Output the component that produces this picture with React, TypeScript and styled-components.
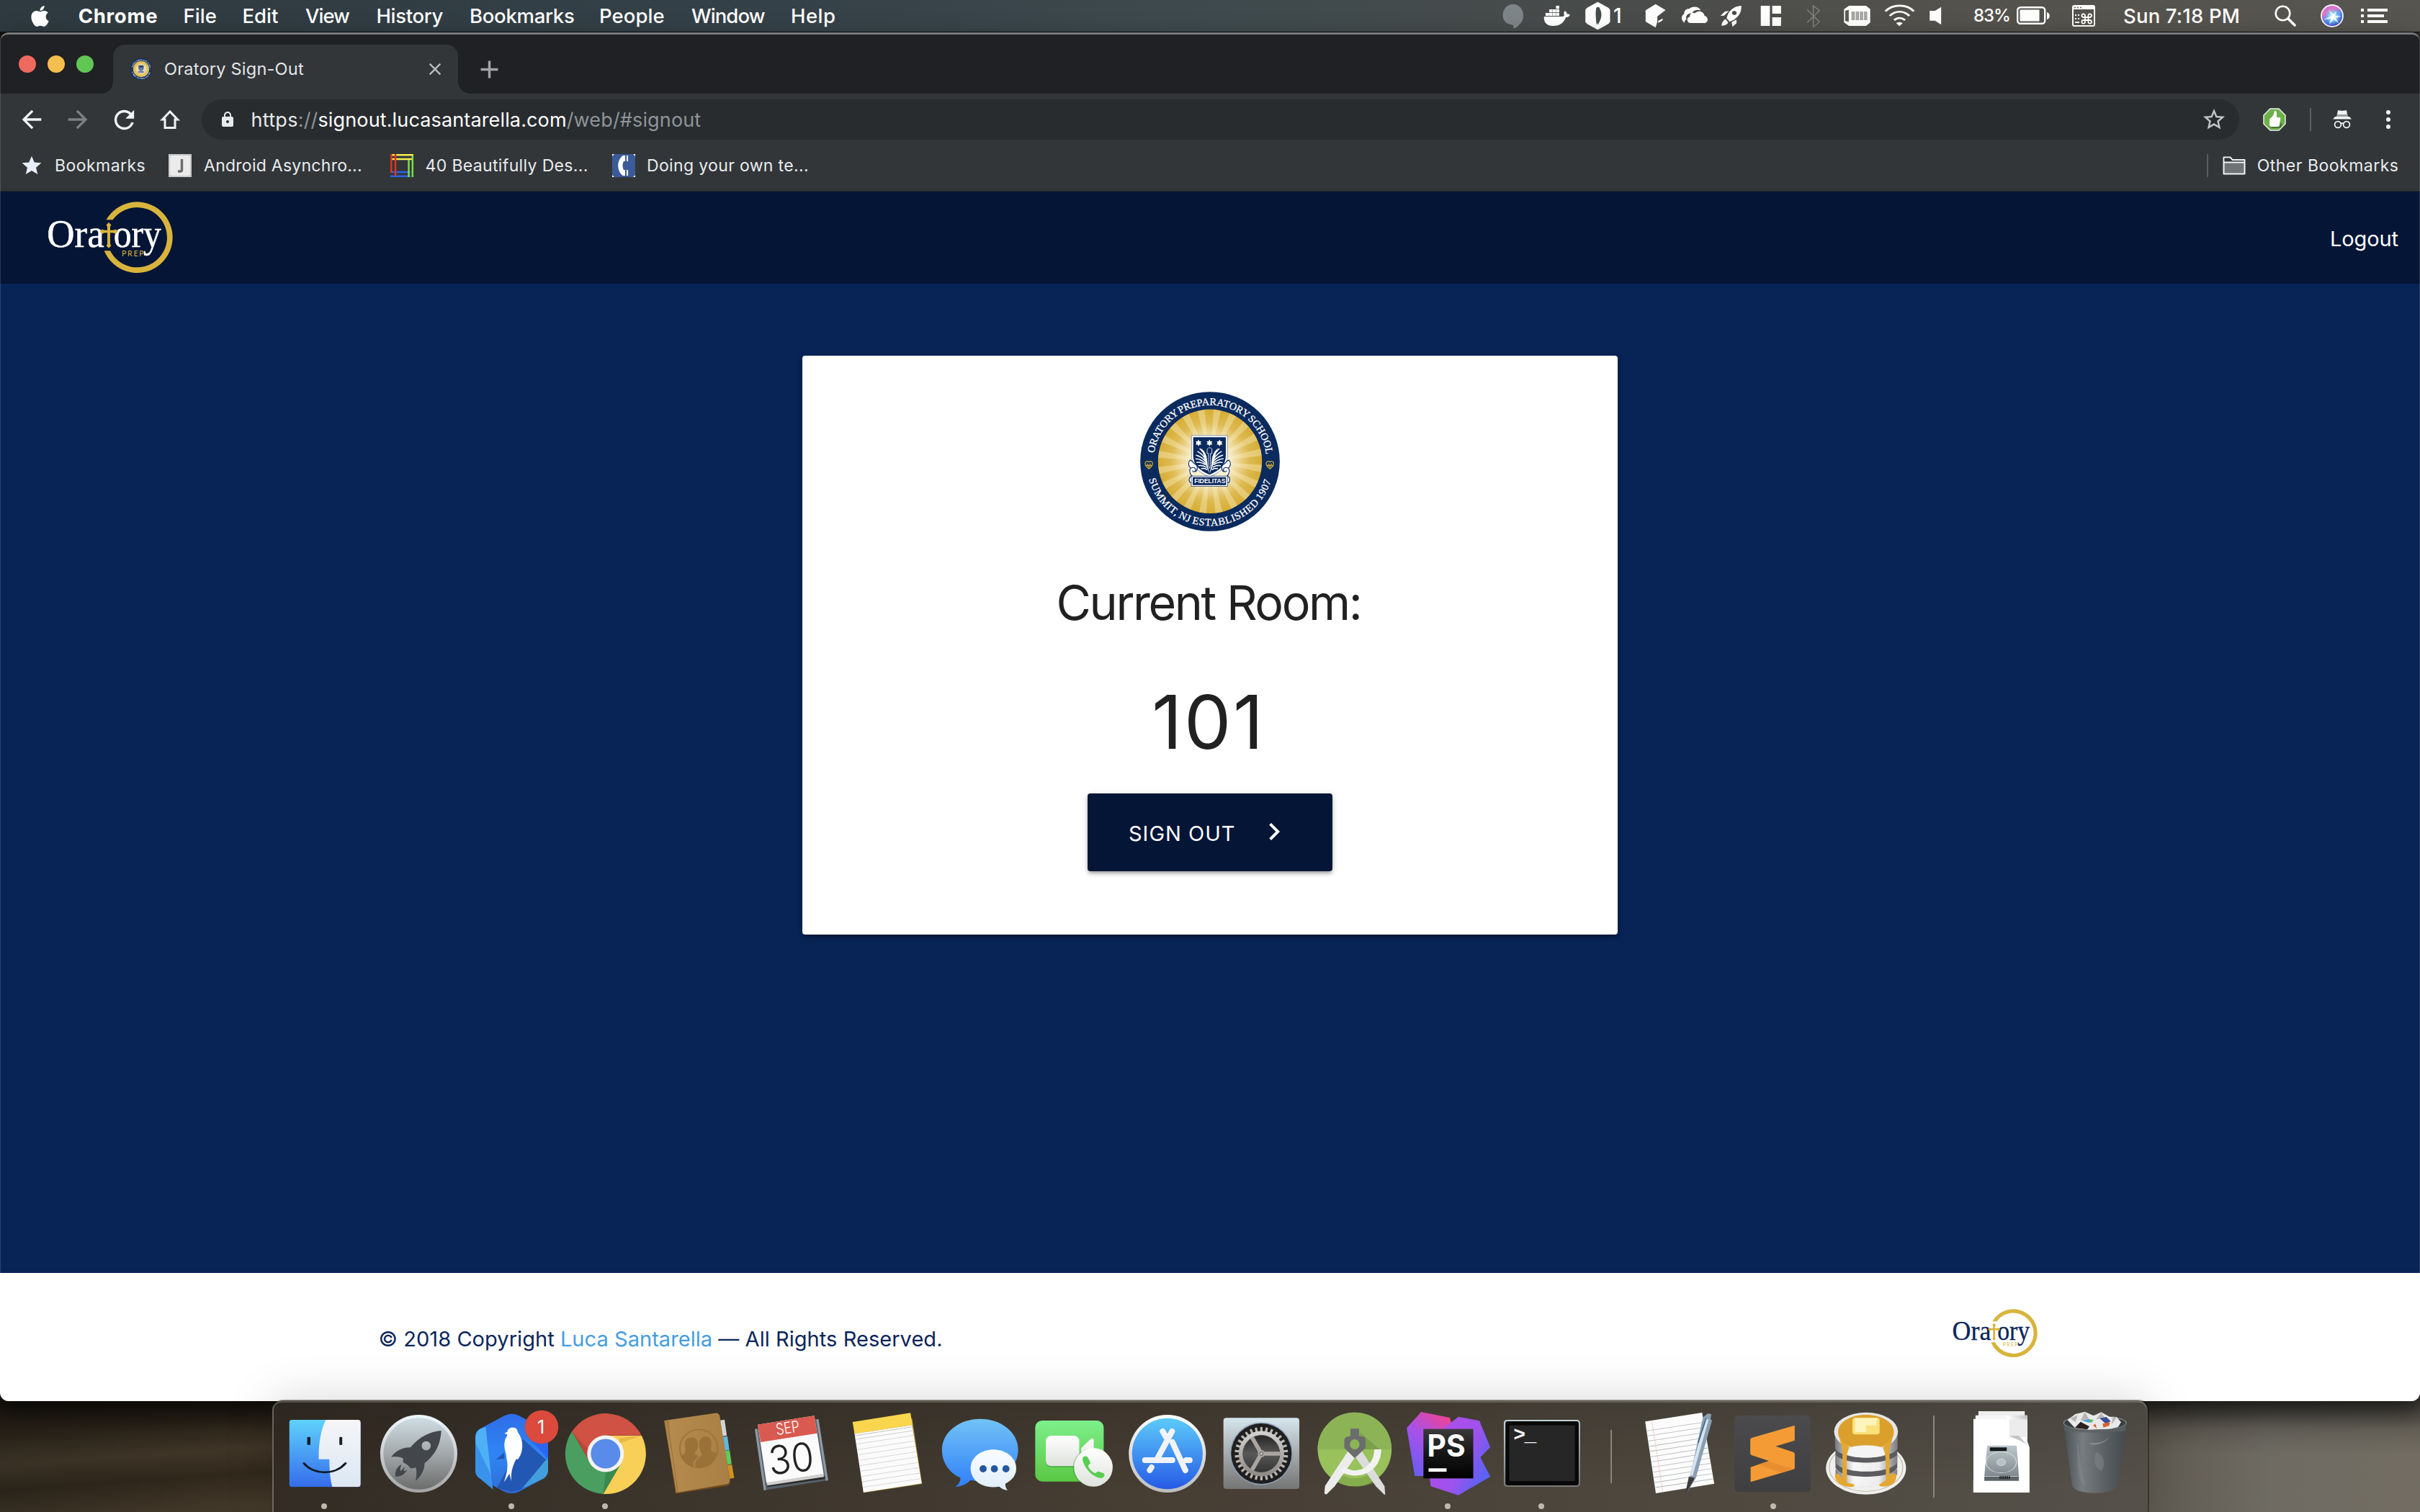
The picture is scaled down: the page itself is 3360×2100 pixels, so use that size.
import React from "react";
import styled, { createGlobalStyle } from "styled-components";
import { FaApple } from "react-icons/fa";
import {
  MdAdd,
  MdArrowBack,
  MdArrowForward,
  MdChevronRight,
  MdClose,
  MdLock,
  MdRefresh,
  MdStar,
  MdStarBorder,
} from "react-icons/md";

const sans = `Inter, "Liberation Sans", sans-serif`;

const Global = createGlobalStyle`
  * { box-sizing: border-box; }
  body { margin: 0; font-family: ${sans}; font-optical-sizing: none; }
  svg { display: block; flex: none; }
`;

/* ---------- desktop ---------- */

const Desktop = styled.div`
  width: 3360px;
  height: 2100px;
  overflow: hidden;
  display: flex;
  flex-direction: column;
  background:
    linear-gradient(180deg, rgba(0, 0, 0, 0.55) 1940px, rgba(0, 0, 0, 0.12) 1985px, rgba(0, 0, 0, 0) 2020px),
    linear-gradient(176deg, transparent 1985px, rgba(255, 235, 190, 0.07) 2030px, transparent 2065px, rgba(255, 235, 190, 0.08) 2110px),
    linear-gradient(90deg, #2a2319 0, #33291d 380px, #4a453d 2900px, #62605b 3150px, #66625a 3360px);
`;

const MenuBar = styled.header`
  height: 45px;
  flex: none;
  display: flex;
  align-items: center;
  border-bottom: 1px solid #0c0d0e;
  background: linear-gradient(90deg, #2e3a40 0, #354148 1100px, #3e4a4d 1700px, #484b4a 2200px, #54524d 2750px, #575550 3360px);
  color: #fff;
  font-size: 27.5px;
  line-height: 44px;
  white-space: nowrap;
`;

const AppleMark = styled.div`
  width: 108.7px;
  padding-left: 39px;
  height: 44px;
  display: flex;
  align-items: center;
`;

const MenuItem = styled.div<{ $w: number; $track?: number; $bold?: boolean }>`
  width: ${(p) => p.$w}px;
  flex: none;
  font-weight: ${(p) => (p.$bold ? 700 : 500)};
  letter-spacing: ${(p) => p.$track ?? 0}px;
`;

const Spacer = styled.div`
  flex: 1;
`;

const Tray = styled.div`
  display: flex;
  align-items: center;
  height: 44px;
`;

const TraySlot = styled.div<{ $w: number }>`
  width: ${(p) => p.$w}px;
  height: 44px;
  display: flex;
  align-items: center;
  flex: none;
`;

const TrayText = styled(TraySlot)<{ $size?: number; $track?: number }>`
  font-weight: 500;
  font-size: ${(p) => p.$size ?? 27.5}px;
  letter-spacing: ${(p) => p.$track ?? 0}px;
`;

/* ---------- browser window ---------- */

const Window = styled.main`
  position: relative;
  height: 1901px;
  flex: none;
  display: flex;
  flex-direction: column;
  overflow: hidden;
  border-top: 3px solid #77797a;
  border-radius: 12px;
  box-shadow: 0 14px 34px rgba(0, 0, 0, 0.5);
  &::after {
    content: "";
    position: absolute;
    inset: 0;
    border: 1px solid rgba(255, 255, 255, 0.14);
    border-top: 0;
    border-radius: 10px;
    pointer-events: none;
  }
`;

const TabStrip = styled.div`
  height: 82px;
  flex: none;
  display: flex;
  background: #202124;
`;

const Lights = styled.div`
  width: 157px;
  height: 82px;
  padding-left: 26px;
  display: flex;
  align-items: center;
  gap: 16px;
`;

const Light = styled.i<{ $c: string }>`
  width: 24px;
  height: 24px;
  border-radius: 50%;
  background: ${(p) => p.$c};
`;

const Tab = styled.div`
  position: relative;
  margin-top: 14px;
  width: 479px;
  height: 68px;
  border-radius: 16px 16px 0 0;
  background: #323639;
  display: flex;
  align-items: center;
  padding: 0 18.5px 0 24px;
  color: #e3e5e7;
  &::before,
  &::after {
    content: "";
    position: absolute;
    bottom: 0;
    width: 16px;
    height: 16px;
  }
  &::before {
    left: -16px;
    background: radial-gradient(circle at 0 0, transparent 15.5px, #323639 16px);
  }
  &::after {
    right: -16px;
    background: radial-gradient(circle at 100% 0, transparent 15.5px, #323639 16px);
  }
`;

const TabTitle = styled.span`
  flex: 1;
  margin-left: 17px;
  padding-bottom: 1px;
  font-size: 23.5px;
  letter-spacing: 0.24px;
  white-space: nowrap;
`;

const NewTab = styled.div`
  margin: 14px 0 0 23px;
  height: 68px;
  display: flex;
  align-items: center;
  color: #a2a5a8;
`;

const Toolbar = styled.div`
  height: 72px;
  flex: none;
  display: flex;
  align-items: center;
  padding-left: 12px;
  background: #323639;
  color: #f1f3f4;
`;

const ToolButton = styled.div<{ $w?: number; $dim?: boolean }>`
  width: ${(p) => p.$w ?? 64}px;
  height: 72px;
  display: flex;
  align-items: center;
  justify-content: center;
  color: ${(p) => (p.$dim ? "#7e8183" : "#f1f3f4")};
`;

const Omnibox = styled.div`
  margin-left: 12px;
  width: 2829px;
  height: 56px;
  border-radius: 28px;
  background: #282c2f;
  display: flex;
  align-items: center;
  padding: 0 17.5px 0 24px;
`;

const Url = styled.div`
  flex: 1;
  margin-left: 20.5px;
  font-size: 27px;
  letter-spacing: 0.14px;
  white-space: nowrap;
  color: #8f9497;
`;

const UrlPart = styled.span<{ $c: string; $track?: number }>`
  color: ${(p) => p.$c};
  letter-spacing: ${(p) => p.$track ?? 0.14}px;
`;

const Rule = styled.i<{ $h: number; $after?: number }>`
  width: 2px;
  height: ${(p) => p.$h}px;
  margin-right: ${(p) => p.$after ?? 0}px;
  background: #5a5e61;
  flex: none;
`;

const BookmarkBar = styled.div`
  height: 64px;
  flex: none;
  display: flex;
  align-items: center;
  padding: 0 29.5px 8px 28px;
  background: #323639;
  border-bottom: 1px solid #27292b;
  color: #e9ebed;
  font-size: 23px;
  letter-spacing: 0.4px;
  white-space: nowrap;
`;

const Bookmark = styled.div<{ $w?: number; $gap?: number; $track?: number }>`
  width: ${(p) => (p.$w ? `${p.$w}px` : "auto")};
  display: flex;
  align-items: center;
  gap: ${(p) => p.$gap ?? 16}px;
  letter-spacing: ${(p) => p.$track ?? 0.4}px;
`;

/* ---------- web page ---------- */

const SiteNav = styled.nav`
  height: 128px;
  flex: none;
  display: flex;
  justify-content: space-between;
  align-items: center;
  padding: 0 30px 1px 66px;
  background: #041536;
  color: #fff;
  font-size: 29px;
  letter-spacing: -0.1px;
`;

const NavLink = styled.a`
  padding-top: 4px;
`;

const Hero = styled.section`
  height: 1374px;
  flex: none;
  padding-top: 100px;
  background: #082355;
  display: flex;
  justify-content: center;
  align-items: flex-start;
`;

const Card = styled.div`
  width: 1132px;
  height: 804px;
  padding-top: 50px;
  border-radius: 4px;
  background: #fff;
  color: #212121;
  display: flex;
  flex-direction: column;
  align-items: center;
  box-shadow: 0 4px 4px rgba(0, 0, 0, 0.14), 0 6px 2px -4px rgba(0, 0, 0, 0.12), 0 2px 10px rgba(0, 0, 0, 0.2);
`;

const RoomLabel = styled.h4`
  margin: 59px 0 0;
  height: 80px;
  line-height: 80px;
  font-weight: 400;
  font-size: 66.3px;
  letter-spacing: -2.4px;
  text-indent: -4px;
`;

const RoomNumber = styled.h2`
  margin: 66px 0 0;
  height: 120px;
  line-height: 120px;
  font-weight: 400;
  font-size: 103.7px;
  letter-spacing: 2.5px;
  text-indent: -4px;
`;

const SignOutButton = styled.button`
  margin: 39px 0 0;
  width: 340px;
  height: 108px;
  padding: 2px 0 0 57px;
  border: 0;
  border-radius: 4px;
  display: flex;
  align-items: center;
  gap: 29px;
  background: #041536;
  color: #fff;
  font: 400 29px ${sans};
  letter-spacing: 1px;
  box-shadow: 0 4px 4px rgba(0, 0, 0, 0.14), 0 6px 2px -4px rgba(0, 0, 0, 0.12), 0 2px 10px rgba(0, 0, 0, 0.2);
  svg { margin-top: -4px; }
`;

const SiteFooter = styled.footer`
  flex: 1;
  display: flex;
  justify-content: space-between;
  align-items: flex-start;
  padding: 50px 531px 0 525.5px;
  background: #fff;
  color: #0b2659;
  font-size: 29px;
  letter-spacing: 0.05px;
`;

const Copyright = styled.p`
  margin: 22px 0 0;
  line-height: 40px;
`;

const Link = styled.a`
  color: #459de4;
`;

/* ---------- dock ---------- */

const Dock = styled.div`
  position: relative;
  margin: -1px 0 0 378px;
  width: 2604px;
  height: 155px;
  flex: none;
  display: flex;
  padding-left: 4.5px;
  border: 2px solid rgba(150, 150, 135, 0.35);
  border-top-width: 3px;
  border-bottom: 0;
  border-radius: 14px 14px 0 0;
  background: linear-gradient(180deg, rgba(0, 0, 0, 0.12), rgba(0, 0, 0, 0) 120px),
    linear-gradient(92deg, #322c24 0, #3b342b 500px, #463d33 1200px, #4d473d 1900px, #55514a 2604px);
  box-shadow: 0 0 66px rgba(0, 0, 0, 0.17), 1px 0 0 1px rgba(0, 0, 0, 0.35);
`;

const Cell = styled.div`
  width: 130px;
  flex: none;
  display: flex;
  flex-direction: column;
  align-items: center;
`;

const RunningDot = styled.i`
  width: 8px;
  height: 8px;
  margin-top: 1px;
  border-radius: 50%;
  background: #bfb8ad;
`;

const DockRule = styled.i<{ $slot: number; $top: number; $h: number; $left: number }>`
  width: 2px;
  height: ${(p) => p.$h}px;
  margin: ${(p) => p.$top}px ${(p) => p.$slot - p.$left - 2}px 0 ${(p) => p.$left}px;
  flex: none;
  background: #8b867c;
`;

/* Dock artwork is drawn on a stretched artboard: sx units per pixel across, 3 down. */
const Art = ({ x, sx = 2.24, run, children }: { x: number; sx?: number; run?: boolean; children: React.ReactNode }) => (
  <Cell>
    <svg width="130" height="139" viewBox={`${x} 54 ${130 * sx} 417`} preserveAspectRatio="none" overflow="visible">
      {children}
    </svg>
    {run && <RunningDot />}
  </Cell>
);

/* Switches back to square pixels around a point of the artboard. */
const Sq = ({ x, y, sx = 2.24, r = 0, children }: { x: number; y: number; sx?: number; r?: number; children: React.ReactNode }) => (
  <g transform={`translate(${x} ${y}) scale(${sx} 3) rotate(${r})`}>{children}</g>
);

const Grad = ({ id, a, b, m }: { id: string; a: string; b: string; m?: string }) => (
  <linearGradient id={id} x1="0" y1="0" x2="0" y2="1">
    <stop offset="0" stopColor={a} />
    {m && <stop offset=".5" stopColor={m} />}
    <stop offset="1" stopColor={b} />
  </linearGradient>
);

/* ---------- logos ---------- */

const OratoryLogo = ({ width, ink }: { width: number; ink: string }) => (
  <svg width={width} height={(width * 298) / 522} viewBox="198 119 522 298">
    <path fill="#d8b43c" d="M442.3 195A148 148 0 1 1 434 324L459.2 324A125 125 0 1 0 469.5 195Z" />
    <g fill={ink} stroke={ink} strokeWidth="1.5" fontFamily='"Liberation Serif", serif' fontSize="164">
      <text x="196" y="308" textLength="238" lengthAdjust="spacingAndGlyphs">Ora</text>
      <text x="473" y="308" textLength="199" lengthAdjust="spacingAndGlyphs">ory</text>
    </g>
    <g fill="#d8b43c">
      <rect x="447" y="212" width="12" height="96" />
      <rect x="422" y="238" width="64" height="11" />
      <path d="M453 206l10 10-4 8h-12l-4-8zM453 313l10-10-4-8h-12l-4 8zM416 243.500l9-9 9 4v11l-9 4zM491 243.500l-9-9-9 4v11l9 4z" />
      <text x="507" y="347" fontFamily="Lato, sans-serif" fontSize="32" textLength="92">PREP</text>
    </g>
  </svg>
);

const rays = Array.from({ length: 20 }, (_, i) => {
  const a = ((i * 18 + 4) * Math.PI) / 180;
  const b = a + (8 * Math.PI) / 180;
  return `M420 363L${420 + 217 * Math.cos(a)} ${363 + 217 * Math.sin(a)}L${420 + 217 * Math.cos(b)} ${363 + 217 * Math.sin(b)}Z`;
}).join("");

const star = (x: number, y: number) =>
  `M${x} ${y - 14}l4 7h8l-4 7 4 7h-8l-4 7-4-7h-8l4-7-4-7h8z`;

const Seal = ({ size, id }: { size: number; id: string }) => (
  <svg width={size} height={size} viewBox="129 72 582 583">
    <defs>
      <radialGradient id={`${id}g`}>
        <stop offset="0" stopColor="#fffdf6" />
        <stop offset=".38" stopColor="#f8eecd" />
        <stop offset=".75" stopColor="#deba52" />
        <stop offset="1" stopColor="#d6ad35" />
      </radialGradient>
      <path id={`${id}t`} d="M186.800 328.700A236 236 0 0 1 654.500 336.800" />
      <path id={`${id}b`} d="M164.800 436.800A265 265 0 0 0 676 437" />
    </defs>
    <circle cx="420" cy="363.500" r="291" fill="#0b2a5e" />
    <circle cx="420" cy="363" r="217" fill={`url(#${id}g)`} />
    <path d={rays} fill="#fdf3cf" opacity=".36" />
    <g fill="#fff" fontFamily='"Liberation Serif", serif' fontSize="43" stroke="#fff" strokeWidth=".8">
      <text textLength="676" wordSpacing="-4">
        <textPath href={`#${id}t`} textLength="676">ORATORY PREPARATORY SCHOOL</textPath>
      </text>
      <text textLength="684" wordSpacing="-4">
        <textPath href={`#${id}b`} textLength="684">SUMMIT, NJ ESTABLISHED 1907</textPath>
      </text>
    </g>
    <g fill="none" stroke="#c9a43a" strokeWidth="4">
      <path d="M165 394c-12-9-18-18-15-26 3-7 11-7 15-2 4-5 12-5 15 2 3 8-3 17-15 26zM158 372l7 14 7-14M152 380h26" />
      <path d="M670 394c-12-9-18-18-15-26 3-7 11-7 15-2 4-5 12-5 15 2 3 8-3 17-15 26zM663 372l7 14 7-14M657 380h26" />
    </g>
    <path d="M343 255h150v84c0 42-30 72-75 88-45-16-75-46-75-88z" fill="#fff" stroke="#8d99b0" strokeWidth="3" />
    <path d="M350 262h136v76c0 40-26 64-68 80-42-16-68-40-68-80z" fill="#0b2a5e" />
    <path d={star(372, 286) + star(418, 286) + star(460, 286)} fill="#fff" />
    <g fill="none" stroke="#fff" strokeWidth="4.500" strokeLinecap="round">
      <path d="M378 310c8 8 16 16 26 34M369 322c10 6 22 14 32 32M363 337c12 4 26 10 37 24M361 352c12 0 26 6 39 18M365 367c12-2 24 2 36 10M373 381c10-2 20 0 30 6M385 393c6-2 14-2 22 4" />
      <path d="M458 310c-8 8-16 16-26 34M467 322c-10 6-22 14-32 32M473 337c-12 4-26 10-37 24M475 352c-12 0-26 6-39 18M471 367c-12-2-24 2-36 10M463 381c-10-2-20 0-30 6M451 393c-6-2-14-2-22 4" />
    </g>
    <path d="M382 308c24 16 26 44 28 72l8 34 8-34c2-28 4-56 28-72-14 24-16 58-26 84l-10 22-10-22c-10-26-12-60-26-84z" fill="#fff" />
    <path d="M408 312c4-8 16-8 20 0v18h-6v52l-4 10-4-10v-52h-6z" fill="#0b2a5e" stroke="#fff" strokeWidth="2.500" />
    <g fill="#fff" stroke="#0b2a5e" strokeWidth="3.500">
      <path d="M345 424c-10-8-14-30-2-34 8-4 18 0 17 10-1 8-12 8-13 1M341 392c-14-10-12-26-4-34 10 0 12 12 20 16 14 6 12 26 2 32" />
      <path d="M491 424c10-8 14-30 2-34-8-4-18 0-17 10 1 8 12 8 13 1M495 392c14-10 12-26 4-34-10 0-12 12-20 16-14 6-12 26-2 32" />
      <path d="M345 424c-16 4-14 26-4 28h6zM491 424c16 4 14 26 4 28h-6z" />
    </g>
    <rect x="342" y="424" width="151" height="43" fill="#fff" stroke="#0b2a5e" strokeWidth="2" />
    <rect x="348" y="429" width="139" height="33" fill="#0b2a5e" />
    <text x="355" y="455" fill="#fff" fontFamily='"Liberation Sans", sans-serif' fontWeight="700" fontSize="27" textLength="129" lengthAdjust="spacingAndGlyphs">
      FIDELITAS
    </text>
  </svg>
);

/* ---------- status icons ---------- */

const Glyph = ({ x, w, children }: { x: number; w: number; children: React.ReactNode }) => (
  <TraySlot $w={w / 2.45}>
    <svg width={w / 2.45} height="44" viewBox={`${x} 0 ${w} 132`} preserveAspectRatio="none" fill="#fff">
      {children}
    </svg>
  </TraySlot>
);

const StatusIcons = () => (
  <Tray>
    <Glyph x={0} w={150}>
      <path fill="#7d8487" d="M73 17c20 0 35 21 35 47 0 18-6 32-15 40-4 6-9 11-18 15l-2-15C53 104 38 88 38 64 38 38 53 17 73 17z" />
    </Glyph>
    <Glyph x={150} w={145}>
      <path d="M184 54h12v12h-12zM196.500 54h11v12h-11zM208.500 54h10v12h-10zM219.500 54h11v12h-11zM196.500 39h11v13h-11zM208.500 39h10v13h-10zM219.500 39h11v13h-11zM219.500 24h11v13h-11z" />
      <path d="M179 69h62c6 0 8-4 6-9-2-6 1-12 3-14 4 3 7 7 7 13 4-1 8 0 10 3-2 7-8 10-14 10-6 22-20 36-43 36-22 0-33-14-31-39z" />
    </Glyph>
    <Glyph x={295} w={120}>
      <path d="M362 8l5 3 32 22 5 8v50l-5 8-32 22-5 3-5-3-32-22-5-8V41l5-8 32-22z" />
      <path fill="#454c4c" d="M357 32c4-5 12-3 12 4 8 16 6 36 2 46-3 10-6 14-8 22l-2-8-3 7c-2-18-2-28-3-44 0-10 1-18 2-27z" />
    </Glyph>
    <TrayText $w={85 / 2.45} $size={28}>1</TrayText>
    <Glyph x={500} w={120}>
      <path d="M558 17l34 25-28 26v23l-6 24-34-25V43zM567 87l15-10v8l-15 11z" />
    </Glyph>
    <Glyph x={620} w={140}>
      <path d="M657 95c-12-8-14-28-2-37 0-14 8-22 17-21 8-12 32-12 38 3l2 3c-14-5-26 1-31 12-14 0-22 12-18 24-5 6-8 10-6 16z" />
      <path d="M676 96c-14-2-13-24-1-26-2-14 8-20 17-15 10-14 30-8 32 10 14 4 15 28 1 31z" />
    </Glyph>
    <Glyph x={760} w={120}>
      <path fillRule="evenodd" d="M850 24c1 26-8 44-23 56-6 5-12 8-17 10l-10-14c2-14 8-28 18-38 9-9 20-13 32-14zM826 45a8 9 0 1 0 .1 0z" />
      <path d="M808 46l-14 2-15 18 12-1zM833 82l1 14-14 16-3-20zM797 80l8 14c-4 12-14 12-22 14 0-12 4-24 14-28z" />
    </Glyph>
    <Glyph x={880} w={140}>
      <path d="M916 24h31v84h-31zM955 24h30v33h-30zM955 72h30v36h-30z" />
    </Glyph>
    <Glyph x={1020} w={140}>
      <path fill="none" stroke="#85837f" strokeWidth="3.500" d="M1074 40l42 51-21 22V24l21 20-42 50" />
    </Glyph>
    <Glyph x={1160} w={150}>
      <path d="M1217 24h58l14 14v56l-14 14h-58l-17-14V38z" />
      <path fill="#5a5955" d="M1204 44l12-3v50l-12-4z" />
      <path fill="#a6a5a3" d="M1225 48h12v36h-12zM1240 48h11v36h-11zM1254 48h11v36h-11zM1268 48h11v36h-11z" />
    </Glyph>
    <Glyph x={1310} w={150}>
      <g fill="none" stroke="#fff" strokeWidth="8">
        <path d="M1341 47c26-31 72-31 97 0M1356 66c20-23 46-23 67 0M1371 84c11-12 25-12 37 0" />
      </g>
      <path d="M1378 97c6-6 16-6 22 0l-11 12z" />
    </Glyph>
    <Glyph x={1460} w={180}>
      <path d="M1490 45h18l21-16v74l-21-17h-18z" />
    </Glyph>
    <TrayText $w={60} $size={24} $track={-1.1}>83%</TrayText>
    <TraySlot $w={77}>
      <svg width="48" height="26" viewBox="0 0 48 26" fill="#fff">
        <rect x="1.200" y="1.200" width="38" height="22.500" rx="4" fill="none" stroke="#fff" strokeWidth="2.400" />
        <rect x="4.500" y="4.500" width="27" height="16" />
        <path d="M42 8c5 1 5 9 0 10z" />
      </svg>
    </TraySlot>
    <TraySlot $w={71}>
      <svg width="32" height="30" viewBox="0 0 32 30">
        <rect x="1" y="1" width="30" height="28" rx="2" fill="none" stroke="#fff" strokeWidth="2" />
        <path fill="#fff" d="M1 1h30v5H1zM4 13h2v2H4zM8 13h2v2H8zM4 18h2v2H4zM8 18h2v2H8zM4 23h6v2H4z" />
        <path stroke="#54534f" strokeWidth="1.500" d="M3 3.500h2M7 3.500h2M11 3.500h2" />
        <path fill="none" stroke="#fff" strokeWidth="1.800" d="M18 14.500v9a2.300 2.300 0 1 1-2.300-2.500h9a2.300 2.300 0 1 1-2.300 2.500v-9a2.300 2.300 0 1 1 2.300 2.500h-9a2.300 2.300 0 1 1 2.300-2.500z" />
      </svg>
    </TraySlot>
    <TrayText $w={210} $track={0.17}>Sun 7:18 PM</TrayText>
    <TraySlot $w={64}>
      <svg width="30" height="30" viewBox="0 0 30 30" fill="none" stroke="#fff">
        <circle cx="11.500" cy="11.500" r="9.800" strokeWidth="2.600" />
        <path d="M19 19l9 9" strokeWidth="3.600" strokeLinecap="round" />
      </svg>
    </TraySlot>
    <TraySlot $w={56}>
      <svg width="32" height="32" viewBox="0 0 32 32">
        <defs>
          <linearGradient id="siri" x1=".2" y1="0" x2=".7" y2="1">
            <stop offset="0" stopColor="#b07fe0" />
            <stop offset=".3" stopColor="#ec6fc0" />
            <stop offset=".55" stopColor="#5a8af0" />
            <stop offset="1" stopColor="#3b48c9" />
          </linearGradient>
          <radialGradient id="siriGlow">
            <stop offset="0" stopColor="#fff" />
            <stop offset=".45" stopColor="#8feaf5" stopOpacity=".8" />
            <stop offset="1" stopColor="#58c8f0" stopOpacity="0" />
          </radialGradient>
        </defs>
        <circle cx="16" cy="16" r="15" fill="url(#siri)" stroke="#f2f0f4" strokeWidth="1.800" />
        <circle cx="17" cy="17" r="12" fill="url(#siriGlow)" />
        <path fill="#fff" d="M16 16L11 8l7 6 4-5-2 7 9 0-8 3 4 7-7-5-6 7 2-8-10 1z" opacity=".85" />
      </svg>
    </TraySlot>
    <TraySlot $w={82}>
      <svg width="37" height="20" viewBox="0 0 37 20" fill="#fff">
        <path d="M0 0h4v4H0zM9 0h28v4H9zM0 8h4v4H0zM9 8h23v4H9zM0 16h4v4H0zM9 16h28v4H9z" />
      </svg>
    </TraySlot>
  </Tray>
);

/* ---------- dock apps ---------- */

const cog = Array.from({ length: 30 }, (_, i) => `rotate(${i * 12})`);

const DockApps = () => (
  <Dock>
    <Art x={56} run>
      <defs>
        <Grad id="fa" a="#5fd2fb" b="#356cec" />
        <Grad id="fb" a="#f6f5f8" b="#dbe7f4" />
        <clipPath id="fc"><rect x="93" y="126" width="222" height="280" rx="9" ry="12" /></clipPath>
      </defs>
      <g clipPath="url(#fc)">
        <rect x="93" y="126" width="222" height="280" fill="url(#fa)" />
        <path d="M207 126C190 172 184 230 185 290h33c0 42 2 82 9 116h90V126z" fill="url(#fb)" />
      </g>
      <rect x="149" y="197" width="10" height="34" rx="4" fill="#11202e" />
      <rect x="249" y="197" width="9" height="34" rx="4" fill="#1c2126" />
      <path d="M139 307c30 50 98 50 129 0" fill="none" stroke="#131b28" strokeWidth="8" strokeLinecap="round" />
    </Art>
    <Art x={347.2}>
      <defs>
        <Grad id="la" a="#cfdde3" m="#a3a8aa" b="#6c6c6c" />
        <Grad id="lb" a="#eef8ff" b="#a5a5a5" />
      </defs>
      <ellipse cx="496" cy="267" rx="120" ry="162" fill="url(#lb)" />
      <ellipse cx="496" cy="267" rx="110" ry="149" fill="url(#la)" />
      <path fill="#43474b" fillRule="evenodd" d="M566 171c-34 4-68 24-96 70-24 0-44 12-60 40 14-2 26-2 38 6-2 10-2 16 4 20 8 4 12 12 18 20 6 2 12 0 16-4 4 14 4 32 0 58 20-24 28-48 28-74 34-36 50-80 52-136zM519 215a14 19 0 1 0 .1 0z" />
      <path fill="#43474b" d="M442 312c-12 8-20 24-19 50 16 2 28-6 37-28l-9 6c-4-6 0-10 2-17-5 4-9 10-13 17-4-8 0-18 2-28z" />
    </Art>
    <Art x={638.4} run>
      <defs><Grad id="ba" a="#2f6de8" m="#2f86f3" b="#2f6dd8" /></defs>
      <path d="M785 101c10 0 18 4 26 10l72 52c10 8 15 20 15 38v132c0 18-5 30-15 38l-72 52c-16 12-36 12-52 0l-72-52c-10-8-15-20-15-38V201c0-18 5-30 15-38l72-52c8-6 16-10 26-10z" fill="url(#ba)" />
      <path d="M704 156l-17 8c-10 8-15 20-15 38v20l49 136z" fill="#4fb1f5" />
      <path d="M672 222l49 136 6 58-40-45c-10-8-15-20-15-38z" fill="#3a92ec" />
      <path d="M780 310l40-104 76 92-84 120-29 9-44-18z" fill="#2357b4" />
      <path d="M736 292l26-30v26z" fill="#2357b4" />
      <path d="M893 290l-74 120 64-39c10-8 15-20 15-38v-40z" fill="#429fdc" />
      <path d="M832 196l66 92v-87c0-18-5-30-15-38l-50-36z" fill="#2b66f2" />
      <path fill="#fff" d="M762 183l9-7c2-14 10-19 18-18 10 0 14 8 15 20 16 28 18 64 8 96l-8 18-4-4-6 14c-6 22-12 40-10 80l-6-32-17 36c10-40 14-72 8-98 0-30-12-44-4-82 4-8 6-12 6-20z" />
      <Sq x={878} y={156}>
        <circle r="23.300" fill="#db4a3c" />
        <text x="-1" y="9" textAnchor="middle" fill="#fff" fontFamily={sans} fontSize="25">1</text>
      </Sq>
    </Art>
    <Art x={929.6} run>
      <Sq x={1077} y={267}>
        <path fill="#cf5244" d="M-46.700-30.800A56 56 0 0 1 50-25.200L0-25.200-21.600 12.600z" />
        <path fill="#f8cf57" d="M50.100-25A56 56 0 0 1-3.300 56L21.600 12.600 0-25z" />
        <path fill="#4a9f60" d="M-3.300 56A56 56 0 0 1-46.700-30.800L-21.600 12.600 21.600 12.600z" />
        <path fill="#a83a30" opacity=".5" d="M-46.700-30.800L-21.600 12.600-24-6z" />
        <path fill="#d9a93c" opacity=".6" d="M20-22L50-25 18-14z" />
        <path fill="#2f7d45" opacity=".6" d="M-3.300 56L19 18 0 25z" />
        <circle r="25.500" fill="#f3f3f3" />
        <circle r="20.500" fill="#588bea" />
      </Sq>
    </Art>
    <Art x={1220.8}>
      <defs><linearGradient id="ca"><stop offset="0" stopColor="#a77b3e" /><stop offset=".1" stopColor="#b58a4e" /><stop offset="1" stopColor="#a97f45" /></linearGradient></defs>
      <path fill="#d4d4d4" d="M1433 128l14-3 7 66-16 4z" />
      <path fill="#62b6df" d="M1440 197l16-3 6 57-16 4z" />
      <path fill="#5dcb5c" d="M1447 256l16-3 6 57-16 4z" />
      <path fill="#cf9322" d="M1455 315l15-3 7 56-16 4z" />
      <path fill="#6f4a1b" d="M1262 132l32 302 160-32c8-2 12-12 10-24l-30-240z" />
      <path fill="url(#ca)" d="M1259 129l158-31c8-2 14 4 15 12l31 262c1 12-2 20-10 22l-156 36z" />
      <path fill="none" stroke="#8c6630" strokeWidth="2" d="M1269 128l33 300" />
      <ellipse cx="1367" cy="246" rx="59" ry="80" fill="none" stroke="#9b7238" strokeWidth="4" />
      <path fill="#9a7138" d="M1324 230c-4-36 38-42 40-6 2 20-4 28-8 36-4 10 8 12 10 22-14 10-18 22-14 40-22-8-34-24-40-46 12-6 16-10 12-46zM1368 226c0-38 38-42 38-4 0 24-4 30 2 36 6 4 14 4 14 6-2 34-22 60-54 62-18-2-16-30 0-42 6-10 12-10 6-24-4-10-6-18-6-34z" />
    </Art>
    <Art x={-11.2}>
      <path fill="#55626c" d="M18 165l198-42 30 255-200 41z" />
      <path fill="#8e9aa3" d="M18 165l7-2 28 256-7 0zM209 124l7-1 30 255-7 2z" />
      <path fill="#2e2a26" d="M40 210l195 150 2 12-180 34z" />
      <path fill="#cfcfcf" d="M54 386l178-36 1 14-176 36z" />
      <path fill="#fbfbfb" d="M27 146l176-37 29 242-178 37z" />
      <path fill="#d95a50" d="M27 146l176-37 9 73-176 37z" />
      <Sq x={86} y={190} r={-8.9}>
        <text fill="#fff" fontFamily={sans} fontWeight="300" fontSize="22" textLength="33" lengthAdjust="spacingAndGlyphs">SEP</text>
      </Sq>
      <Sq x={70} y={355} r={-6}>
        <text x="-2" fill="#232323" fontFamily={sans} fontWeight="300" fontSize="55" textLength="63" lengthAdjust="spacingAndGlyphs">30</text>
      </Sq>
    </Art>
    <Art x={280}>
      <path fill="#b8963a" d="M327 150l180-30 31 273-182 37z" />
      <path fill="#fbfbfb" d="M328 184l179-36 30 243-181 37z" />
      <path fill="#f9d64d" d="M322 135l180-38 6 50-180 37z" />
      <path stroke="#8d8d8d" strokeWidth="2.500" strokeDasharray="3 2" d="M330 192l178-37" />
      <path stroke="#cfcfd3" strokeWidth="2.500" d="M332 207l178-36M334 227l178-36M337 250l177-36M340 272l177-36M342 295l178-36M345 317l177-36M347 340l178-36M350 362l177-36M352 384l178-36M355 407l178-36" />
    </Art>
    <Art x={571.2}>
      <defs><Grad id="ma" a="#72c3f5" b="#3080fb" /><Grad id="mb" a="#fbfdff" b="#dfedf9" /></defs>
      <path fill="url(#ma)" d="M719 122c66 0 118 56 118 129s-52 130-118 130c-12 0-20-2-30-4-12 16-26 26-47 28 10-10 16-22 15-38-34-20-57-62-57-116 0-73 53-129 119-129z" />
      <path fill="url(#mb)" d="M760 250c39 0 71 34 71 78 0 28-12 50-34 64 0 12 2 18 7 28-10-2-20-8-26-16-52 12-89-26-89-76 0-44 32-78 71-78z" />
      <g fill="#2457a0"><ellipse cx="728" cy="330" rx="11" ry="15" /><ellipse cx="763" cy="330" rx="11" ry="15" /><ellipse cx="799" cy="330" rx="11" ry="15" /></g>
    </Art>
    <Art x={862.4}>
      <defs><Grad id="va" a="#7df08b" b="#5ac843" /><Grad id="vb" a="#fff" b="#dfe2dd" /></defs>
      <rect x="890" y="129" width="213" height="254" rx="22" ry="29" fill="url(#va)" />
      <rect x="923" y="196" width="104" height="128" rx="17" ry="22" fill="#2f8e2c" opacity=".5" />
      <rect x="923" y="192" width="104" height="127" rx="17" ry="22" fill="url(#vb)" />
      <path fill="url(#vb)" d="M1033 244l28-36c6-8 11-6 11 2v90l-39-34z" />
      <ellipse cx="1067" cy="325" rx="60" ry="80" fill="#2f8e2c" opacity=".35" />
      <ellipse cx="1071" cy="324" rx="60" ry="80" fill="url(#vb)" />
      <path fill="#58cf52" d="M1037 286c4-10 14-12 18 0l6 16c2 10-8 10-6 18 4 12 12 22 20 28 6 2 6-10 14-6l12 6c8 4 4 16-2 20-20 6-60-36-62-82z" />
    </Art>
    <Art x={1153.6}>
      <defs><Grad id="aa" a="#5ccbfa" b="#265ae6" /><Grad id="ab" a="#fff" b="#bdbdbd" /></defs>
      <ellipse cx="1301" cy="267" rx="120" ry="162" fill="url(#ab)" />
      <ellipse cx="1301" cy="267" rx="110" ry="148" fill="url(#aa)" />
      <Sq x={1301} y={267}>
        <g stroke="#f1f3f6" strokeWidth="8" strokeLinecap="round" fill="none">
          <path d="M6.500-31L-15 9M-6.500-31L0-20M-31 9H7M26 9H31M7-16L25 23M-22 19L-24.500 23" />
        </g>
      </Sq>
    </Art>
    <Art x={-33.6}>
      <defs><Grad id="pa" a="#d5e6ee" m="#a6abad" b="#757575" /><Grad id="pb" a="#d0d0d0" b="#8f8b87" /><Grad id="pc" a="#202020" m="#585858" b="#303030" /></defs>
      <rect x="-3" y="118" width="236" height="296" rx="9" ry="12" fill="url(#pa)" />
      <Sq x={115} y={267}>
        <circle r="43.500" fill="#8ea0b8" />
        <circle r="42" fill="#1f1f1f" />
        <circle r="29" fill="url(#pc)" />
        <g fill="#bab6b2">{cog.map((t) => <rect key={t} x="-1.600" y="-37" width="3.200" height="8" transform={t} />)}</g>
        <circle r="28.500" fill="none" stroke="url(#pb)" strokeWidth="6" />
        <circle r="25.500" fill="none" stroke="#4a4846" strokeWidth="1" />
        <g stroke="#aaa5a1" strokeWidth="5.500"><path d="M0 0H26M0 0L-13-22.500M0 0L-13 22.500" /></g>
        <circle r="5" fill="#aaa5a1" /><circle r="3" fill="#7b7977" /><circle r="1.500" fill="#c5c7ca" />
      </Sq>
    </Art>
    <Art x={257.6}>
      <ellipse cx="405" cy="249" rx="115" ry="154" fill="#99c15c" />
      <path fill="#8cb457" d="M290 249a115 154 0 0 1 230 0z" />
      <path fill="#7ba04a" d="M420 175l62 74h-50z" />
      <path fill="#78a043" d="M360 352c30 24 62 24 90-2l24 30c-30 32-100 32-132-4z" opacity=".6" />
      <path fill="#ececec" d="M385 255l24 22-66 126-26 34-6-4 2-32z" />
      <path fill="#dcdcdc" d="M427 255l-22 22 66 126 27 36 2-4-2-32z" />
      <path fill="none" stroke="#f2f2f2" strokeWidth="22" d="M365 331c54 42 112-2 112-82" />
      <path fill="#6b6c6c" fillRule="evenodd" d="M392 163h27v30l18 6 2 10v34l-34 43-32-43v-34l4-10 15-6zM405 207a15 21 0 1 0 .1 0z" />
    </Art>
    <Art x={548.8} run>
      <defs>
        <linearGradient id="sa" x1=".8" y1="0" x2=".2" y2="1"><stop offset="0" stopColor="#f5428c" /><stop offset=".5" stopColor="#a552ea" /><stop offset="1" stopColor="#6a5cf2" /></linearGradient>
        <linearGradient id="sb" x1="0" y1="0" x2="1" y2=".6"><stop offset="0" stopColor="#b44be8" /><stop offset=".65" stopColor="#a052ec" /><stop offset="1" stopColor="#5b62f4" /></linearGradient>
        <Grad id="sc" a="#3a3a3a" m="#161616" b="#000" />
      </defs>
      <path fill="url(#sa)" d="M612 93l89 24 20 100-90 143h-39L567 160z" />
      <path fill="url(#sb)" d="M728 113l65 17 34 110-31 42 31 81-99 77-86-37-8-80 52-166z" />
      <rect x="619" y="164" width="155" height="206" fill="url(#sc)" />
      <Sq x={633} y={280}>
        <text x="-1" fill="#fff" fontFamily={sans} fontWeight="700" fontSize="42" textLength="53" lengthAdjust="spacingAndGlyphs">PS</text>
      </Sq>
      <rect x="635" y="328" width="56" height="14" fill="#fff" />
    </Art>
    <Art x={840} run>
      <defs><Grad id="ta" a="#c2d2da" b="#7a7a7a" /></defs>
      <rect x="869" y="126" width="237" height="279" rx="10" ry="13" fill="url(#ta)" />
      <rect x="874" y="132" width="228" height="267" rx="7" ry="9" fill="#080808" />
      <rect x="886" y="149" width="204" height="232" fill="#262626" />
      <Sq x={899} y={214}>
        <text fill="#f4f4f4" fontFamily='"Liberation Mono", monospace' fontWeight="700" fontSize="28" textLength="32">&gt;_</text>
      </Sq>
    </Art>
    <DockRule $slot={62} $left={31} $top={38} $h={74} />
    <Art x={131.3} sx={1.96}>
      <path fill="#fcfcfc" d="M165 133l155-37 33 296-159 40z" />
      <path stroke="#b5b8bd" strokeWidth="2.500" d="M169 172l155-36M171 193l155-36M173 215l156-37M176 237l155-37M178 258l156-37M180 280l156-37M183 301l156-37M185 323l156-37M187 344l157-37M189 366l157-37M191 387l158-37M193 408l157-36" />
      <path stroke="#f0b7b0" strokeWidth="1.500" d="M183 130l30 296" />
      <path fill="#8b9fb4" d="M335 100l10 2-2 22 4 4-44 240-24 60-3-4 12-68 34-240z" />
      <path fill="#d5e4f0" d="M330 122l8 2-44 236-8-6z" />
      <path fill="#3f3a3a" d="M284 362l16 6-22 62-3-4z" />
      <path stroke="#33587d" strokeWidth="3" fill="none" d="M331 120l-22 102" />
    </Art>
    <Art x={386.1} sx={1.96} run>
      <defs><Grad id="ua" a="#4b4b4d" b="#3f3f41" /></defs>
      <rect x="408" y="108" width="207" height="318" rx="10" ry="15" fill="url(#ua)" />
      <path fill="#f59b35" d="M572 149v63l-52 24 48 24 4 6v62l-3 4-117 53v-62l50-26-48-24-3-6v-61l4-5z" />
      <path fill="#d9822a" d="M500 299l70 32-34 16-62-34z" opacity=".5" />
    </Art>
    <Art x={640.9} sx={1.96}>
      <defs>
        <linearGradient id="qa"><stop offset="0" stopColor="#77777b" /><stop offset=".3" stopColor="#f6f6f6" /><stop offset=".7" stopColor="#ececec" /><stop offset="1" stopColor="#7b7b80" /></linearGradient>
      </defs>
      <ellipse cx="766" cy="327" rx="109" ry="110" fill="#efefee" />
      <ellipse cx="766" cy="324" rx="100" ry="100" fill="none" stroke="#b9ad95" strokeWidth="2" />
      <path fill="#d7d7d5" d="M684 330h166c0 100-166 100-166 0z" />
      <path fill="#5b5b60" d="M683 175h168v150c-16 56-152 56-168 0z" />
      <path fill="url(#qa)" d="M683 330c20 44 146 44 168 0v22c-16 70-152 70-168 0zM683 270c20 46 146 46 168 0v34c-20 50-148 50-168 0zM681 178h171v68c-20 50-150 50-170 0z" />
      <ellipse cx="766" cy="175" rx="87" ry="80" fill="#e6e6e6" />
      <path fill="#f4f4f4" d="M722 244c20-14 70-14 88 0l10 26c-30 18-78 18-108 0z" />
      <path fill="#dba02c" d="M766 105c44 0 76 32 76 72 0 28-14 50-34 62-24-10-60-10-84 0-20-12-34-34-34-62 0-40 32-72 76-72z" />
      <path fill="#e4a832" d="M694 205l26 34c-8 26-7 60-6 98v50l20 8c4 14-20 14-34 2-12-8-20-24-18-44l10-2 10 20V262c0-20-4-34-8-57zM838 205l-26 34c8 26 8 60 8 98v40l-18 18c-4 12 20 12 34 0 10-10 14-24 12-44l-10-2-8 14V262c0-20 4-34 8-57z" />
      <path fill="#f9e27a" d="M734 117h64l5 8v56l-5 6h-64l-5-6v-56z" />
      <path fill="#fdf4bd" d="M736 119h60l-2 30h-28v28h-30z" />
    </Art>
    <DockRule $slot={56} $left={27} $top={18} $h={114} />
    <Art x={1005.500} sx={1.96}>
      <defs><Grad id="da" a="#bcc7cc" b="#7f898e" /><linearGradient id="db" x1="0" y1="1" x2="1" y2="0"><stop offset=".5" stopColor="#fff" /><stop offset="1" stopColor="#bdbdbd" /></linearGradient></defs>
      <path fill="#17150f" d="M1056 124h20V98h120v280h-140z" opacity=".6" />
      <path fill="#ededed" d="M1072 90h126v120h-126z" />
      <path fill="#f6f6f6" d="M1064 107h141v150h-141z" />
      <path fill="#fff" d="M1058 122h92c26 20 50 60 61 120v187h-153z" />
      <path fill="url(#db)" d="M1146 107h59v96c-22-20-50-60-59-96z" />
      <path fill="#ececec" d="M1156 124h49v84l-4-10h-45z" />
      <path fill="#c4c4c4" d="M1156 192h26l26 44c-16-24-38-30-52-44z" />
      <path fill="#5c6468" d="M1088 362h94v18h-94z" />
      <path fill="url(#da)" d="M1096 233h80l6 128h-94z" />
      <rect x="1103" y="241" width="46" height="15" fill="#17191a" />
      <ellipse cx="1134" cy="303" rx="41" ry="44" fill="none" stroke="#dfe7ea" strokeWidth="2" />
      <ellipse cx="1134" cy="303" rx="12" ry="14" fill="#b7c1c6" stroke="#e4ebee" strokeWidth="1.500" />
      <path stroke="#111" strokeWidth="2.500" d="M1131 359v14M1136 359v14M1141 359v14M1146 359v14M1151 359v14M1156 359v14" />
    </Art>
    <Art x={1260.3} sx={1.96}>
      <defs><linearGradient id="wa"><stop offset="0" stopColor="#484e52" /><stop offset=".3" stopColor="#777c80" /><stop offset=".65" stopColor="#5c6063" /><stop offset="1" stopColor="#43494d" /></linearGradient></defs>
      <path fill="url(#wa)" d="M1303 138l24 262c4 20 28 31 62 31s58-11 62-31l24-262c-20 42-152 42-172 0z" />
      <ellipse cx="1389" cy="139" rx="85" ry="30" fill="#3b3f42" stroke="#858b90" strokeWidth="2.500" />
      <path fill="#e9e9e9" d="M1314 126l22-24 26-10 22 16 6-2 16-12 24 20 18 0 12 22-8 20-22 8-30 2-30 2-34-6z" />
      <path fill="#b5b5b5" d="M1322 120l20-14-6 30zM1362 92l10 30-22 8zM1406 96l10 22-24 6zM1448 116l-14 30 4-34z" />
      <path fill="#2b2220" d="M1334 160l16-26 24 20-6 12z" />
      <path fill="#4da3d8" d="M1354 130l18-8 14 6-12 10z" />
      <path fill="#6bc441" d="M1374 124l10 2-4 14z" />
      <path fill="#3a4f96" d="M1402 120l18-6 12 18-14 10z" />
      <path fill="#d5622d" d="M1410 142l20-6-2 14-16 8zM1384 150l6-8 4 20z" />
      <path fill="#5b6063" opacity=".8" d="M1304 148c20 26 150 26 170 0l-2 24c-24 10-140 10-166 0z" />
      <path fill="#9a9ea2" opacity=".75" d="M1372 222c24 4 46-4 54-24 0 18-40 44-54 24z" />
      <path fill="#83888c" opacity=".5" d="M1340 210c8 40 8 120 24 190-20-10-22-60-24-190zM1392 260c20 10 30 50 14 80-14-10-24-40-14-80z" />
    </Art>
  </Dock>
);

/* ---------- page ---------- */

const menus: [string, number, number][] = [
  ["File", 81.9, 0],
  ["Edit", 87.5, 0],
  ["View", 98.5, -1],
  ["History", 129.5, -0.33],
  ["Bookmarks", 180, -0.27],
  ["People", 128, 0.09],
  ["Window", 138, -0.9],
  ["Help", 70, 0.45],
];

export default function App() {
  return (
    <Desktop>
      <Global />
      <MenuBar>
        <AppleMark><FaApple size={33} /></AppleMark>
        <MenuItem $w={145.900} $track={0.73} $bold>Chrome</MenuItem>
        {menus.map(([label, w, track]) => (
          <MenuItem key={label} $w={w} $track={track}>{label}</MenuItem>
        ))}
        <Spacer />
        <StatusIcons />
      </MenuBar>

      <Window>
        <TabStrip>
          <Lights>
            <Light $c="#ee6a5f" />
            <Light $c="#f5bf4f" />
            <Light $c="#62c655" />
          </Lights>
          <Tab>
            <Seal size={30} id="fav" />
            <TabTitle>Oratory Sign-Out</TabTitle>
            <MdClose size={28} color="#b9bcbf" />
          </Tab>
          <NewTab><MdAdd size={41} /></NewTab>
        </TabStrip>

        <Toolbar>
          <ToolButton><MdArrowBack size={40} /></ToolButton>
          <ToolButton $dim><MdArrowForward size={40} /></ToolButton>
          <ToolButton><MdRefresh size={41} /></ToolButton>
          <ToolButton>
            <svg width="28" height="28" viewBox="0 0 28 28" fill="none" stroke="currentColor" strokeWidth="3">
              <path d="M14 3L3.500 14H7v11.500h14V14h3.500z" />
            </svg>
          </ToolButton>
          <Omnibox>
            <MdLock size={24} color="#e8eaed" />
            <Url>
              <UrlPart $c="#e8eaed" $track={0.3}>https</UrlPart>://<UrlPart $c="#fff">signout.lucasantarella.com</UrlPart>/web/#signout
            </Url>
            <MdStarBorder size={36} color="#c3c6c9" />
          </Omnibox>
          <ToolButton $w={98}>
            <svg width="32" height="32" viewBox="0 0 32 32">
              <path d="M10 1h12l9 9v12l-9 9H10l-9-9V10z" fill="#6cb04a" stroke="#e9efe6" strokeWidth="1.500" />
              <path d="M9 26l4 2h11l3-4-4-6z" fill="#3f7c2c" />
              <path fill="#fff" d="M16 4c2-1 3 1 3 3v6h3c2 0 3 1 2 3l-1 8c0 1-1 2-3 2h-8c-2 0-3-1-3-3v-6c0-2 1-3 3-4 2-2 3-4 4-9z" />
            </svg>
          </ToolButton>
          <Rule $h={32} />
          <ToolButton $w={86}>
            <svg width="26" height="26" viewBox="0 0 26 26" fill="#f1f3f4">
              <path d="M7 0c2 1 3 0 6 1 3-1 4 0 6-1l1 6H6z" />
              <path fill="#9b9ea0" d="M5.500 6h15l.5 3H5z" />
              <path d="M3 9h20l3 3.500H0z" />
              <g fill="none" stroke="#f1f3f4" strokeWidth="1.800"><circle cx="7" cy="20" r="4.400" /><circle cx="19" cy="20" r="4.400" /><path d="M11 19c1-1 3-1 4 0" /></g>
            </svg>
          </ToolButton>
          <ToolButton $w={42}>
            <svg width="6" height="26" viewBox="0 0 6 26" fill="#f1f3f4">
              <circle cx="3" cy="3" r="3" /><circle cx="3" cy="13" r="3" /><circle cx="3" cy="23" r="3" />
            </svg>
          </ToolButton>
        </Toolbar>

        <BookmarkBar>
          <Bookmark $w={206} $track={0.45}><MdStar size={32} color="#e8eefb" />Bookmarks</Bookmark>
          <Bookmark $w={308} $gap={17} $track={0.26}>
            <svg width="32" height="32" viewBox="0 0 32 32">
              <rect width="32" height="32" fill="#c9c9c9" /><rect x="2" y="2" width="28" height="28" rx="3" fill="#ebebeb" />
              <path d="M13 24h3.500c1.500 0 2-1 2-2.500V7" fill="none" stroke="#6d6d6d" strokeWidth="3.500" />
            </svg>
            Android Asynchro...
          </Bookmark>
          <Bookmark $w={308} $gap={16.5} $track={0.35}>
            <svg width="32" height="32" viewBox="0 0 32 32" fill="none">
              <path stroke="#f7ee4f" strokeWidth="2.500" d="M0 1.200h32M2 7h28" />
              <path stroke="#2a63e6" strokeWidth="2.500" d="M0 30.800h28M2 25h26" />
              <path stroke="#7be048" strokeWidth="2.500" d="M30.800 2v30M25.500 8v24" />
              <path stroke="#e2331f" strokeWidth="2.500" d="M1.200 0v26M7 0v30" />
            </svg>
            40 Beautifully Des...
          </Bookmark>
          <Bookmark $gap={16} $track={0.35}>
            <svg width="32" height="32" viewBox="0 0 32 32">
              <rect width="32" height="32" rx="1" fill="#3b5b98" />
              <path fill="#fff" d="M0 0h3L0 3zM32 0v3l-3-3zM0 32v-3l3 3zM32 32h-3l3-3z" />
              <path fill="#fff" d="M15 2h3v8h-2c-2 3-2 9 0 12h2v8h-3C6 24 6 8 15 2zM20 2h2v8h-2zM20 22h2v8h-2z" />
            </svg>
            Doing your own te...
          </Bookmark>
          <Spacer />
          <Rule $h={32} $after={20} />
          <Bookmark $gap={15.5} $track={0.5}>
            <svg width="32" height="26" viewBox="0 0 32 26">
              <path d="M1.500 24.500v-23h9l3 3.500h17v19.500z" fill="#6f7376" stroke="#f1f3f4" strokeWidth="2" strokeLinejoin="round" />
              <path d="M2.500 2.500h7.600l3 3.500h16.400v2h-27z" fill="#323639" />
              <path d="M1 8.500h30" stroke="#f1f3f4" strokeWidth="1.800" />
            </svg>
            Other Bookmarks
          </Bookmark>
        </BookmarkBar>

        <SiteNav>
          <OratoryLogo width={174} ink="#fff" />
          <NavLink>Logout</NavLink>
        </SiteNav>
        <Hero>
          <Card>
            <Seal size={194} id="seal" />
            <RoomLabel>Current Room:</RoomLabel>
            <RoomNumber>101</RoomNumber>
            <SignOutButton>
              SIGN OUT
              <MdChevronRight size={48} />
            </SignOutButton>
          </Card>
        </Hero>
        <SiteFooter>
          <Copyright>
            © 2018 Copyright <Link>Luca Santarella</Link> — All Rights Reserved.
          </Copyright>
          <OratoryLogo width={118} ink="#0b2659" />
        </SiteFooter>
      </Window>

      <DockApps />
    </Desktop>
  );
}
